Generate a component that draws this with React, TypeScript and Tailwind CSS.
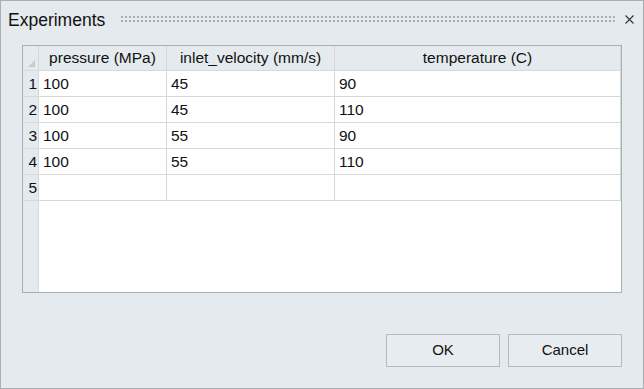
import React from "react";

const rows = [
  ["100", "45", "90"],
  ["100", "45", "110"],
  ["100", "55", "90"],
  ["100", "55", "110"],
  ["", "", ""],
];

export default function App() {
  return (
    <div
      className="w-[644px] h-[389px] bg-[#e4eaed] border border-[#a9afb3] flex flex-col text-[#111]"
      style={{ fontFamily: "'Liberation Sans', Arial, sans-serif" }}
    >
      {/* title bar */}
      <div className="h-[44px] flex items-start pt-[9px] pl-[7px] pr-[9px]">
        <span className="text-[17.5px] leading-[20px]">Experiments</span>
        <svg className="ml-[16px] mt-[6px] flex-1" height="7">
          <defs>
            <pattern id="dots" width="4" height="4" patternUnits="userSpaceOnUse">
              <rect x="0" y="0" width="2" height="2" fill="#a6acb0" />
            </pattern>
          </defs>
          <rect x="0" y="0" width="100%" height="6" fill="url(#dots)" />
        </svg>
        <svg className="ml-[10px] mt-[5px]" width="9" height="9" viewBox="0 0 9 9">
          <path d="M0.5 0.5 L8.5 8.5 M8.5 0.5 L0.5 8.5" stroke="#333" strokeWidth="1.1" />
        </svg>
      </div>

      {/* table */}
      <div className="ml-[21px] w-[600px] h-[248px] border border-[#a9afb3] bg-white flex flex-col text-[15.5px]">
        <div className="flex h-[25px] bg-[#e4eaed] border-b border-[#d5d9dc]">
          <div className="w-[16px] border-r border-[#d5d9dc] relative">
            <svg className="absolute right-[3px] bottom-[3px]" width="7" height="7" viewBox="0 0 7 7">
              <path d="M7 0 L7 7 L0 7 Z" fill="#c9cdd0" />
            </svg>
          </div>
          <div className="w-[128px] border-r border-[#d5d9dc] flex items-center justify-center">pressure (MPa)</div>
          <div className="w-[168px] border-r border-[#d5d9dc] flex items-center justify-center">inlet_velocity (mm/s)</div>
          <div className="w-[286px] border-r border-[#d5d9dc] flex items-center justify-center">temperature (C)</div>
        </div>
        <div className="flex-1 flex">
          <div className="w-[16px] bg-[#e4eaed] border-r border-[#d5d9dc] flex flex-col">
            {rows.map((_, i) => (
              <div key={i} className="h-[26px] border-b border-[#d5d9dc] flex items-center justify-end pr-[1px]">
                {i + 1}
              </div>
            ))}
          </div>
          <div className="flex flex-col">
            {rows.map((r, i) => (
              <div key={i} className="flex h-[26px] border-b border-[#d5d9dc]">
                <div className="w-[128px] border-r border-[#d5d9dc] flex items-center pl-[4px]">{r[0]}</div>
                <div className="w-[168px] border-r border-[#d5d9dc] flex items-center pl-[4px]">{r[1]}</div>
                <div className="w-[286px] border-r border-[#d5d9dc] flex items-center pl-[4px]">{r[2]}</div>
              </div>
            ))}
          </div>
        </div>
      </div>

      {/* buttons */}
      <div className="mt-[41px] flex justify-end gap-[8px] pr-[21px]">
        <button className="w-[114px] h-[33px] border border-[#b5babd] bg-[#e6ecef] text-[15px]">OK</button>
        <button className="w-[114px] h-[33px] border border-[#b5babd] bg-[#e6ecef] text-[15px]">Cancel</button>
      </div>
    </div>
  );
}
